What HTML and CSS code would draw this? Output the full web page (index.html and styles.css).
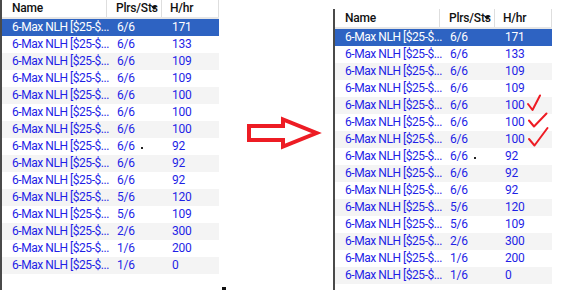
FILE: index.html
```html
<!DOCTYPE html>
<html lang="en">
<head>
<meta charset="UTF-8">
<meta name="viewport" content="width=device-width, initial-scale=1.0">
<title>Tables</title>
<link rel="stylesheet" href="styles.css">
</head>
<body>
<div class="page">
    <div class="panel panel-before" id="before"></div>

    <div class="gap">
        <svg width="114" height="290" viewBox="219 0 114 290">
            <!-- arrow pointing to the sorted list -->
            <polygon points="249,126 283,126 283,119.5 316.5,133 283,146.5 283,140 249,140"
                     fill="none" stroke="#ed1c24" stroke-width="4" stroke-linejoin="miter"/>
            <rect x="222" y="287" width="4" height="3" fill="#111"/>
        </svg>
    </div>

    <div class="panel panel-after" id="after"></div>

    <svg class="ticks" width="36" height="60" viewBox="520 92 36 60">
        <polyline points="528,104 532.5,110 540,95.5" />
        <polyline points="529,120.5 534,126.5 546.5,113.5" />
        <polyline points="529,139 534.5,145.5 547.5,128" />
    </svg>
</div>

<script>
    const rows = [
        ['6/6', '171'],
        ['6/6', '133'],
        ['6/6', '109'],
        ['6/6', '109'],
        ['6/6', '100'],
        ['6/6', '100'],
        ['6/6', '100'],
        ['6/6', '92'],
        ['6/6', '92'],
        ['6/6', '92'],
        ['5/6', '120'],
        ['5/6', '109'],
        ['2/6', '300'],
        ['1/6', '200'],
        ['1/6', '0'],
    ];

    function buildTable(container) {
        const head = document.createElement('div');
        head.className = 'head';
        head.innerHTML =
            '<div class="hcell">Name</div>' +
            '<div class="hcell">Plrs/Sts<span class="sort"></span></div>' +
            '<div class="hcell">H/hr</div>';
        container.appendChild(head);

        rows.forEach((row, index) => {
            const line = document.createElement('div');
            line.className = 'row';
            if (index === 0) line.classList.add('selected');
            else if (index % 2 === 0) line.classList.add('striped');

            // the little speck that sits next to the 8th row
            const seats = index === 7 ? row[0] + '<span class="speck"></span>' : row[0];

            line.innerHTML =
                '<div class="cell">6-Max NLH [$25-$...</div>' +
                '<div class="cell">' + seats + '</div>' +
                '<div class="cell">' + row[1] + '</div>';
            container.appendChild(line);
        });
    }

    buildTable(document.getElementById('before'));
    buildTable(document.getElementById('after'));
</script>
</body>
</html>
```

FILE: styles.css
```css
* {
    box-sizing: border-box;
}

body {
    margin: 0;
    overflow: hidden;
    background-color: white;
    font-family: Roboto, "Liberation Sans", sans-serif;
}

.page {
    position: relative;
    display: flex;
    align-items: flex-start;
    height: 290px;
    overflow: hidden;
}

.panel {
    width: 219px;
    flex-shrink: 0;
    border-left: 2px solid #4a4a4a;
}

.panel-before {
    height: 291px;
    margin-top: -1px;
}

.panel-after {
    height: 281px;
    margin-top: 9px;
}

.gap {
    width: 114px;
    height: 290px;
    flex-shrink: 0;
}

.gap svg {
    display: block;
}

.head,
.row {
    display: grid;
    grid-template-columns: 105px 55px 57px;
}

.head {
    height: 20px;
    border-bottom: 2px solid #e6e6e6;
}

.hcell {
    position: relative;
    line-height: 18px;
    font-size: 12px;
    font-weight: 500;
    letter-spacing: -0.2px;
    color: #111;
    border-right: 1px solid #dedede;
    white-space: nowrap;
}

.hcell:nth-child(1) { padding-left: 10px; }
.hcell:nth-child(2) { padding-left: 9px; }
.hcell:nth-child(3) { padding-left: 8px; }

.sort {
    position: absolute;
    right: 4px;
    top: 7px;
    width: 0;
    height: 0;
    border-left: 3.5px solid transparent;
    border-right: 3.5px solid transparent;
    border-top: 4px solid #111;
}

.row {
    height: 17px;
    line-height: 17px;
    font-size: 12px;
    letter-spacing: -0.45px;
    color: #1f1fe6;
}

.row.striped {
    background-color: #f4f4f4;
}

.row.selected {
    background-color: #2e63c2;
    color: white;
}

.cell {
    padding-left: 10px;
    white-space: nowrap;
}

.cell + .cell {
    letter-spacing: -0.2px;
}

.speck {
    display: inline-block;
    width: 2px;
    height: 2px;
    margin-left: 6px;
    vertical-align: 1px;
    background-color: #222;
}

.ticks {
    position: absolute;
    left: 520px;
    top: 92px;
}

.ticks polyline {
    fill: none;
    stroke: #ee1c24;
    stroke-width: 2;
    stroke-linecap: round;
    stroke-linejoin: round;
}
```
